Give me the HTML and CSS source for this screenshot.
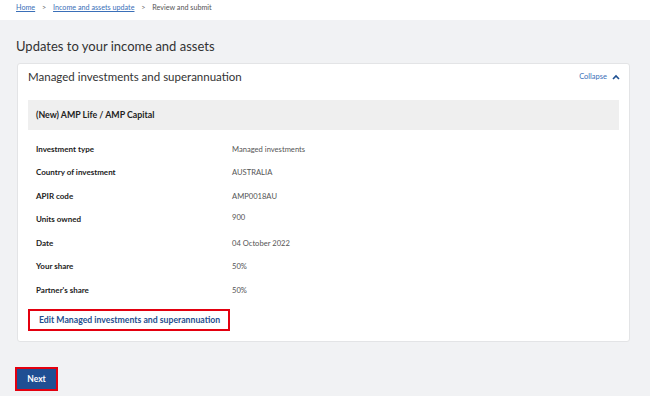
FILE: index.html
```html
<!DOCTYPE html>
<html lang="en">
<head>
    <meta charset="UTF-8">
    <meta name="viewport" content="width=device-width, initial-scale=1.0">
    <title>Review and submit</title>
    <link rel="stylesheet" href="styles.css">
</head>
<body>
    <nav class="breadcrumb">
        <a href="#">Home</a>
        <span class="sep">&gt;</span>
        <a href="#">Income and assets update</a>
        <span class="sep">&gt;</span>
        <span>Review and submit</span>
    </nav>
    <main class="page">
        <h1>Updates to your income and assets</h1>
        <section class="card">
            <div class="card-header">
                <h2>Managed investments and superannuation</h2>
                <a href="#" class="collapse">Collapse
                    <svg width="8" height="6" viewBox="0 0 8 6"><path d="M1 5 L4 2 L7 5" fill="none" stroke="#1d4f91" stroke-width="1.6"/></svg>
                </a>
            </div>
            <div class="item-title">(New) AMP Life / AMP Capital</div>
            <dl class="details">
                <div class="row"><dt>Investment type</dt><dd>Managed investments</dd></div>
                <div class="row"><dt>Country of investment</dt><dd>AUSTRALIA</dd></div>
                <div class="row"><dt>APIR code</dt><dd>AMP0018AU</dd></div>
                <div class="row"><dt>Units owned</dt><dd class="raised">900</dd></div>
                <div class="row"><dt>Date</dt><dd>04 October 2022</dd></div>
                <div class="row"><dt>Your share</dt><dd>50%</dd></div>
                <div class="row"><dt>Partner's share</dt><dd>50%</dd></div>
            </dl>
            <a href="#" class="edit-link">Edit Managed investments and superannuation</a>
        </section>
        <button class="next">Next</button>
    </main>
</body>
</html>
```

FILE: styles.css
```css
* {
    margin: 0;
    padding: 0;
    box-sizing: border-box;
}
body {
    font-family: Lato, "Open Sans", sans-serif;
    background-color: #f1f2f4;
    color: #333;
    width: 650px;
    height: 396px;
    overflow: hidden;
}
.breadcrumb {
    background-color: #fff;
    height: 20px;
    padding: 2px 16px 0;
    font-size: 7.2px;
    line-height: 12px;
    color: #555;
}
.breadcrumb a {
    color: #3a6fb8;
}
.breadcrumb .sep {
    margin: 0 5px;
    color: #666;
}
.page {
    padding: 16px 20px 0 16px;
}
h1 {
    font-size: 13px;
    font-weight: 400;
    line-height: 20px;
    color: #333;
    margin-bottom: 7px;
}
.card {
    margin-left: 1px;
    background-color: #fff;
    border: 1px solid #e3e4e6;
    border-radius: 3px;
    padding: 0 10px 10px;
}
.card-header {
    display: flex;
    align-items: center;
    justify-content: space-between;
    height: 25px;
    margin-bottom: 11px;
}
.card-header h2 {
    font-size: 11.5px;
    font-weight: 400;
    color: #333;
}
.collapse {
    display: flex;
    align-items: center;
    gap: 5px;
    font-size: 7.5px;
    color: #3a6fb8;
    text-decoration: none;
    margin-right: -1px;
}
.item-title {
    background-color: #efefef;
    height: 30px;
    line-height: 30px;
    padding-left: 8px;
    font-size: 8.8px;
    font-weight: 700;
    color: #222;
}
.details {
    margin: 7px 0 7px;
}
.row {
    display: flex;
    align-items: center;
    height: 23.5px;
    padding-left: 8px;
    font-size: 7.6px;
}
.row dt {
    width: 196px;
    font-size: 8px;
    font-weight: 700;
    color: #222;
}
.row dd {
    color: #555;
}
.row dd.raised {
    margin-top: -4px;
}
.edit-link {
    display: block;
    width: fit-content;
    border: 2px solid #e3000f;
    height: 22px;
    line-height: 18px;
    padding: 0 8px 0 9px;
    font-size: 8.7px;
    font-weight: 700;
    color: #1f4e8f;
    text-decoration: none;
}
.next {
    display: block;
    margin-top: 25px;
    margin-left: -1px;
    width: 43px;
    height: 24px;
    border: 2px solid #e3000f;
    background-color: #1f4f93;
    color: #fff;
    font-family: inherit;
    font-size: 8.5px;
    font-weight: 700;
    cursor: pointer;
}
```
